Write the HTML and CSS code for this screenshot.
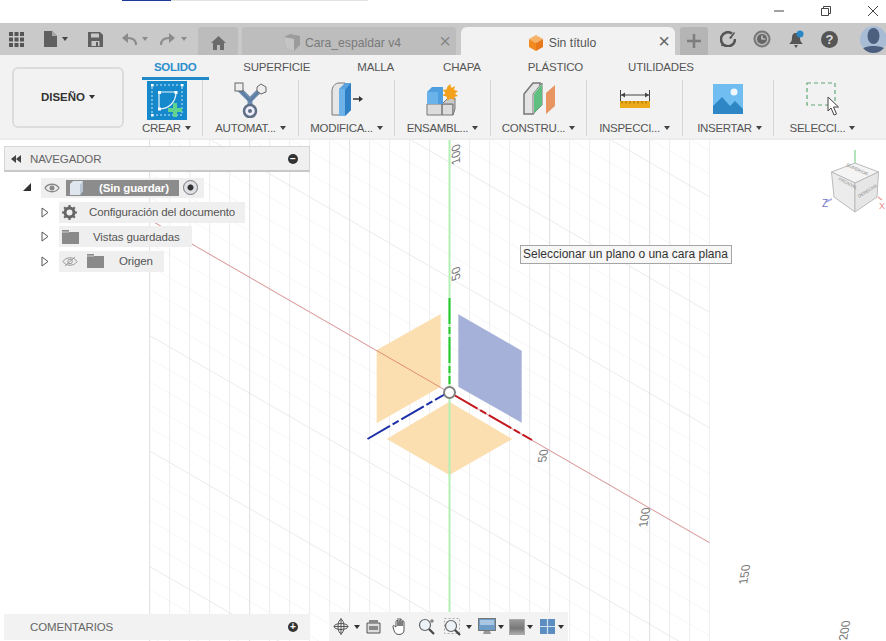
FILE: index.html
```html
<!DOCTYPE html>
<html lang="es">
<head>
<meta charset="utf-8">
<title>Sin título</title>
<link rel="stylesheet" href="styles.css">
</head>
<body>
<div class="app">
  <header class="titlebar">
    <span class="strip-blue"></span><span class="strip-gray"></span>
    <div class="winctl">
      <svg width="12" height="12" viewBox="0 0 12 12"><path d="M1 6h10" stroke="#444" fill="none"/></svg>
      <svg width="12" height="12" viewBox="0 0 12 12"><path d="M1.500 3.500h7v7h-7zM3.500 3.500v-2h7v7h-2" stroke="#444" fill="none"/></svg>
      <svg width="12" height="12" viewBox="0 0 12 12"><path d="M1 1l10 10M11 1L1 11" stroke="#444" fill="none"/></svg>
    </div>
  </header>

  <nav class="tabbar">
    <div class="qat">
      <svg class="q-grid" width="15" height="15" viewBox="0 0 15 15" fill="#555"><path d="M0 0h4v4H0zM5.500 0h4v4h-4zM11 0h4v4h-4zM0 5.500h4v4H0zM5.500 5.500h4v4h-4zM11 5.500h4v4h-4zM0 11h4v4H0zM5.500 11h4v4h-4zM11 11h4v4h-4z"/></svg>
      <svg class="q-file" width="13" height="16" viewBox="0 0 13 16" fill="#606060"><path d="M0 0h8l5 5v11H0z"/><path d="M8 0v5h5" fill="#aaa"/></svg>
      <span class="caret q-c1"></span>
      <svg class="q-save" width="15" height="15" viewBox="0 0 15 15"><path d="M0 0h12l3 3v12H0z" fill="#606060"/><path d="M3 1.500h8v4H3zM3.500 9h8v5h-8z" fill="#c8c8c8"/><path d="M8 10h2v4H8z" fill="#606060"/></svg>
      <svg class="q-undo" width="15" height="13" viewBox="0 0 15 13"><path d="M14 12c0-5-3-7-8-7H3" stroke="#8b8b8b" stroke-width="2" fill="none"/><path d="M6 0L0 5l6 5z" fill="#8b8b8b"/></svg>
      <span class="caret light q-c2"></span>
      <svg class="q-redo" width="15" height="13" viewBox="0 0 15 13"><path d="M1 12c0-5 3-7 8-7h3" stroke="#8b8b8b" stroke-width="2" fill="none"/><path d="M9 0l6 5-6 5z" fill="#8b8b8b"/></svg>
      <span class="caret light q-c3"></span>
    </div>
    <div class="tab home">
      <svg width="15" height="14" viewBox="0 0 15 14" fill="#6b6b6b"><path d="M7.500 0L15 7h-2v7H9V9H6v5H2V7H0z"/></svg>
    </div>
    <div class="tab inactive">
      <svg width="18" height="17" viewBox="0 0 18 17"><path d="M1 3l6-3 10 2v9l-6 6-8-3z" fill="#9c9c9c"/><path d="M1 3l10 2v12l-8-3z" fill="#c4c4c4"/></svg>
      <span class="tab-name">Cara_espaldar v4</span>
      <span class="tab-x">×</span>
    </div>
    <div class="tab active">
      <svg width="16" height="16" viewBox="0 0 16 16"><path d="M8 0l7 4-7 4-7-4z" fill="#f7b267"/><path d="M1 4l7 4v8l-7-4z" fill="#f28a1f"/><path d="M15 4L8 8v8l7-4z" fill="#e9781a"/></svg>
      <span class="tab-name">Sin título</span>
      <span class="tab-x">×</span>
    </div>
    <div class="tab plus">
      <svg width="14" height="14" viewBox="0 0 14 14"><path d="M7 0v14M0 7h14" stroke="#7d7d7d" stroke-width="2.500"/></svg>
    </div>
    <div class="tray">
      <svg width="16" height="16" viewBox="0 0 16 16"><path d="M12 2.500A7 7 0 1 0 15 8" stroke="#555" stroke-width="2.600" fill="none"/><path d="M9 7l5-6 1 1-4 6z" fill="#555"/><path d="M2 12l4 3H1z" fill="#555"/></svg>
      <svg width="18" height="18" viewBox="0 0 18 18"><circle cx="9" cy="9" r="8.500" fill="#777"/><circle cx="9" cy="9" r="6.500" fill="#b8b8b8"/><circle cx="9" cy="9" r="5" fill="#666"/><path d="M9 5.500V9h3.500" stroke="#ddd" stroke-width="1.200" fill="none"/></svg>
      <svg width="16" height="18" viewBox="0 0 16 18"><path d="M7 3c-3 0-4 2-4 5 0 3-1 4-3 6h14c-2-2-3-3-3-6 0-3-1-5-4-5z" fill="#555"/><path d="M5 15h4l-2 3z" fill="#555"/><circle cx="11" cy="4" r="3.500" fill="#2a86c7"/></svg>
      <span class="help">?</span>
      <svg class="avatar" width="27" height="27" viewBox="0 0 27 27"><defs><clipPath id="av"><circle cx="13.500" cy="13.500" r="13.500"/></clipPath></defs><g clip-path="url(#av)"><rect width="27" height="27" fill="#a9bcd6"/><ellipse cx="13.500" cy="10" rx="6" ry="8" fill="#4d5f7e"/><path d="M0 27c1-6 8-7 13.500-7S26 21 27 27z" fill="#4d5f7e"/></g></svg>
    </div>
  </nav>

  <section class="ribbon">
    <button class="design">DISEÑO<span class="caret dark"></span></button>
    <div class="ribbon-main">
      <div class="rtabs">
        <span class="rtab current">SOLIDO</span>
        <span class="rtab">SUPERFICIE</span>
        <span class="rtab">MALLA</span>
        <span class="rtab">CHAPA</span>
        <span class="rtab">PLÁSTICO</span>
        <span class="rtab">UTILIDADES</span>
      </div>
      <div class="tools">
        <div class="tool t-first">
          <svg width="40" height="39" viewBox="0 0 40 39"><rect width="40" height="39" fill="#1589cc"/><rect x="5" y="4" width="30" height="30" fill="none" stroke="#cfe8f6" stroke-dasharray="2 2"/><path d="M12 11h17M12 11v17M12 28c10 0 17-7 17-17" stroke="#e8f5fc" fill="none" stroke-width="1.200"/><path d="M11 10h3v3h-3zM11 26.500h3v3h-3zM27.500 10h3v3h-3zM4 3h2.500v2.500H4zM34 3h2.500v2.500H34zM4 33h2.500v2.500H4z" fill="#fff"/><path d="M26 22h4v5h5v4h-5v5h-4v-5h-5v-4h5z" fill="#5fd38d"/></svg>
          <span class="tool-label">CREAR<span class="caret"></span></span>
        </div>
        <div class="tool">
          <svg width="34" height="36" viewBox="0 0 34 36"><path d="M5 7l11 11 11-11M16 18v8" stroke="#6f8db0" stroke-width="5" fill="none"/><path d="M5 7l11 12 11-12" stroke="#5b7da3" stroke-width="2" fill="none"/><rect x="1" y="1" width="8" height="8" fill="#eee" stroke="#666"/><path d="M27 2l5 3v5l-5 2-4-3V5z" fill="#eee" stroke="#666"/><circle cx="16" cy="29" r="6" fill="#eef" stroke="#5f6f85" stroke-width="2.500"/><circle cx="16" cy="29" r="2" fill="#5f6f85"/></svg>
          <span class="tool-label">AUTOMAT...<span class="caret"></span></span>
        </div>
        <div class="tool">
          <svg width="32" height="35" viewBox="0 0 32 35"><path d="M1 33V9c0-4 3-8 7-8h6v32z" fill="#e6e6e6" stroke="#777"/><path d="M8 33V7l6-6h6v27l-6 6z" fill="#5aa3e0"/><path d="M14 8l6-7v27l-6 6z" fill="#2f7fc4"/><path d="M8 7h6v27H8z" fill="#6db2e8"/><path d="M22 17h7" stroke="#333" stroke-width="1.500"/><path d="M32 17l-4-3v6z" fill="#333"/></svg>
          <span class="tool-label">MODIFICA...<span class="caret"></span></span>
        </div>
        <div class="tool">
          <svg width="33" height="33" viewBox="0 0 33 33"><path d="M1 31V20h15v11zM16 31V20h11v11z" fill="#dcdcdc" stroke="#777"/><path d="M16 20l6-6h7v11l-2 6V20z" fill="#c9c9c9" stroke="#777"/><path d="M1 20V8l5-5h11v17z" fill="#4f9fe0"/><path d="M1 20V8h11v12z" fill="#69b3ea"/><path d="M24 0l1.500 4 3.500-2-1 4 4 1-3 2.500 3 2.500-4 1 .5 3-4-1.500-3 2-1-4-4-1 3-2.500-3-3 4-.5 1-3z" fill="#f5a11c"/></svg>
          <span class="tool-label">ENSAMBL...<span class="caret"></span></span>
        </div>
        <div class="tool">
          <svg width="32" height="33" viewBox="0 0 32 33"><path d="M1 32V12L10 1h7v22l-7 9z" fill="#e4e4e4" stroke="#777" stroke-width="1.500"/><path d="M10 32V12l9-11v22z" fill="#fff" stroke="#777"/><path d="M11 31V12l8-10v21z" fill="#5fbf80"/><path d="M23 32V11l9-8v21z" fill="#e89561"/></svg>
          <span class="tool-label">CONSTRU...<span class="caret"></span></span>
        </div>
        <div class="tool">
          <svg width="30" height="18" viewBox="0 0 30 18"><path d="M.5 0v11M29.500 0v11" stroke="#444"/><path d="M1 5h28" stroke="#444"/><path d="M1 5l4-2.500v5zM29 5l-4-2.500v5z" fill="#444"/><rect y="11" width="30" height="7" fill="#eca918"/><path d="M2 11v2.500M6 11v2.500M10 11v2.500M14 11v2.500M18 11v2.500M22 11v2.500M26 11v2.500" stroke="#9c6a00"/></svg>
          <span class="tool-label">INSPECCI...<span class="caret"></span></span>
        </div>
        <div class="tool t-insert">
          <svg width="30" height="30" viewBox="0 0 30 30"><rect width="30" height="30" fill="#6fbdf1"/><circle cx="21" cy="8" r="3.500" fill="#eef7fd"/><path d="M0 22l9-9 8 9 5-5 8 8v5H0z" fill="#2f86c4"/></svg>
          <span class="tool-label">INSERTAR<span class="caret"></span></span>
        </div>
        <div class="tool t-last">
          <svg width="36" height="34" viewBox="0 0 36 34"><rect x="2" y="1" width="28" height="22" fill="none" stroke="#5fa877" stroke-width="1.200" stroke-dasharray="4 3"/><path d="M23 15v14l3-3 3 7 2.500-1-3-7h5z" fill="#fff" stroke="#444"/></svg>
          <span class="tool-label">SELECCI...<span class="caret"></span></span>
        </div>
      </div>
    </div>
  </section>

  <main class="viewport">
    <svg class="canvas" viewBox="0 140 886 501" preserveAspectRatio="none">
      <defs>
        <pattern id="minor" width="20" height="23.094" patternUnits="userSpaceOnUse" patternTransform="translate(149 219.200) skewY(30)">
          <path d="M.5 0v23.094M0 0h20" stroke="#ededf0" fill="none"/>
        </pattern>
        <pattern id="major" width="100" height="115.470" patternUnits="userSpaceOnUse" patternTransform="translate(149 219.200) skewY(30)">
          <path d="M.5 0v115.470M0 0h100" stroke="#e2e2e6" fill="none"/>
        </pattern>
      </defs>
      <rect x="149" y="140" width="561" height="501" fill="url(#minor)"/>
      <rect x="149" y="140" width="561" height="501" fill="url(#major)"/>
      <path d="M440.700 314v72.700L376.700 423.300V350z" fill="#fbdfb0"/>
      <path d="M458.300 314.300l63.400 36.400v72L458.300 386.700z" fill="#a5b1d9"/>
      <path d="M449.300 401.700l63 37.300-63 36-62.600-36z" fill="#fbdfb0"/>
      <path d="M149 219.200L709.500 542.600" stroke="#c83c3c" stroke-opacity=".5" fill="none"/>
      <rect class="axis-y" x="448.500" y="140" width="2" height="501"/>
      <path d="M449.500 298v86" stroke="#22c92c" stroke-width="2" stroke-dasharray="26 3 7 3"/>
      <path d="M367.500 439l77-44.500" stroke="#1c2fa8" stroke-width="2" stroke-dasharray="26 3 7 3"/>
      <path d="M455 395.500l77 44.500" stroke="#c4161c" stroke-width="2" stroke-dasharray="26 3 7 3"/>
      <circle cx="449.500" cy="392.500" r="5.500" fill="#fff" stroke="#808080" stroke-width="2"/>
      <g class="grid-num">
        <text transform="translate(460 163) rotate(-90) skewX(20)">100</text>
        <text transform="translate(460 279) rotate(-90) skewX(20)">50</text>
        <text transform="translate(546 462) rotate(-80) skewX(15)">50</text>
        <text transform="translate(647 527) rotate(-80) skewX(15)">100</text>
        <text transform="translate(747 584) rotate(-80) skewX(15)">150</text>
        <text transform="translate(847 640) rotate(-80) skewX(15)">200</text>
      </g>
    </svg>

    <aside class="panel navigator">
      <div class="panel-head">
        <span class="collapse"></span><span class="panel-title">NAVEGADOR</span><span class="round-btn">−</span>
      </div>
      <ul class="tree">
        <li class="row">
          <span class="tri-open"></span>
          <div class="chip root">
            <svg width="16" height="10" viewBox="0 0 16 10"><path d="M1 5c3-5 11-5 14 0-3 5-11 5-14 0z" fill="none" stroke="#888" stroke-width="1.300"/><circle cx="8" cy="5" r="2.500" fill="#888"/></svg>
            <div class="root-name">
              <svg width="15" height="14" viewBox="0 0 15 14"><path d="M1 3l3-3h10v10l-3 4H1z" fill="#dfe6ee"/><path d="M11 4l3-4v10l-3 4z" fill="#b9c6d3"/></svg>
              <span>(Sin guardar)</span>
            </div>
            <span class="radio"></span>
          </div>
        </li>
        <li class="row">
          <svg class="tri" width="8" height="11" viewBox="0 0 8 11"><path d="M1 1l6 4.500L1 10z" fill="#fff" stroke="#555"/></svg>
          <div class="chip c-config">
            <svg width="15" height="15" viewBox="0 0 15 15"><circle cx="7.500" cy="7.500" r="4.500" fill="none" stroke="#666" stroke-width="3"/><path d="M7.500 0v15M0 7.500h15M2.200 2.200l10.600 10.600M12.800 2.200L2.200 12.800" stroke="#666" stroke-width="2.200" stroke-dasharray="2.500 10 2.500"/></svg>
            <span>Configuración del documento</span>
          </div>
        </li>
        <li class="row">
          <svg class="tri" width="8" height="11" viewBox="0 0 8 11"><path d="M1 1l6 4.500L1 10z" fill="#fff" stroke="#555"/></svg>
          <div class="chip c-views">
            <svg width="17" height="14" viewBox="0 0 17 14"><path d="M0 0h7v2h10v12H0z" fill="#8a8a8a"/><path d="M0 2h7" stroke="#d0d0d0"/></svg>
            <span>Vistas guardadas</span>
          </div>
        </li>
        <li class="row">
          <svg class="tri" width="8" height="11" viewBox="0 0 8 11"><path d="M1 1l6 4.500L1 10z" fill="#fff" stroke="#555"/></svg>
          <div class="chip c-origin">
            <svg width="16" height="11" viewBox="0 0 16 11"><path d="M1 5.500c3-5 11-5 14 0-3 5-11 5-14 0z" fill="none" stroke="#999"/><circle cx="8" cy="5.500" r="2.300" fill="none" stroke="#999"/><path d="M3 10L13 1" stroke="#999"/></svg>
            <svg width="17" height="14" viewBox="0 0 17 14"><path d="M0 0h7v2h10v12H0z" fill="#8a8a8a"/><path d="M0 2h7" stroke="#d0d0d0"/></svg>
            <span>Origen</span>
          </div>
        </li>
      </ul>
    </aside>

    <div class="tooltip">Seleccionar un plano o una cara plana</div>

    <svg class="cube" width="66" height="70" viewBox="0 0 66 70">
      <path d="M35 0v13" stroke="#9adba6" stroke-width="1.500"/>
      <path d="M12 49L6 52" stroke-width="1.500" stroke="#a9a9e0"/>
      <path d="M58 47l4 3" stroke="#eda0a0" stroke-width="1.500"/>
      <text x="2" y="57" class="cube-z">Z</text>
      <text x="59" y="59" class="cube-x">X</text>
      <path d="M35 13l23.500 9-23.500 11-23.500-11z" fill="#f4f4f4" stroke="#bbb"/>
      <path d="M11.500 22L35 33v29L14 47z" fill="#ececec" stroke="#bbb"/>
      <path d="M58.500 22L35 33v29l22-15z" fill="#e6e6e6" stroke="#bbb"/>
      <text class="cube-t" transform="translate(26 16) rotate(25)">SUPERIOR</text>
      <text class="cube-t" transform="translate(18 30) rotate(28)">FRONTAL</text>
      <text class="cube-t" transform="translate(39 48) rotate(-32)">DERECHA</text>
    </svg>

    <aside class="panel comments">
      <div class="panel-head">
        <span class="panel-title">COMENTARIOS</span><span class="round-btn">+</span>
      </div>
    </aside>

    <div class="navbar">
      <svg width="16" height="17" viewBox="0 0 16 17"><path d="M8 0v17M1 8.500h14" stroke="#555" fill="none"/><ellipse cx="8" cy="8.500" rx="7" ry="3" fill="none" stroke="#555"/><ellipse cx="8" cy="8.500" rx="3" ry="7" fill="none" stroke="#555"/></svg>
      <span class="caret dark n-c5"></span>
      <svg class="n-pan" width="15" height="14" viewBox="0 0 15 14"><path d="M1 3h13v10H1z" fill="#ddd" stroke="#555"/><path d="M3 0h9v3H3z" fill="#888"/><path d="M3 6h9v4H3z" fill="#888"/></svg>
      <svg class="n-hand" width="16" height="17" viewBox="0 0 16 17"><path d="M4 9V3.500c0-1.500 2-1.500 2 0V8-1c0-1.500 2-1.500 2 0V8 2.500c0-1.500 2-1.500 2 0V8 4c0-1.500 2-1.500 2 0v8c0 3-2 4.500-5 4.500-3 0-4-1.500-5-4L1 9c-.5-2 1.500-2 2-.5z" fill="#fff" stroke="#555"/></svg>
      <svg class="n-zoom" width="17" height="17" viewBox="0 0 17 17"><circle cx="7" cy="7" r="5.500" fill="#eef3f7" stroke="#666" stroke-width="1.200"/><path d="M11 11l5 5" stroke="#444" stroke-width="2.200"/><path d="M14 1v4M12 3h4" stroke="#666"/></svg>
      <svg class="n-win" width="18" height="18" viewBox="0 0 18 18"><rect x=".5" y=".5" width="15" height="15" fill="none" stroke="#aaa" stroke-dasharray="2 2"/><circle cx="7" cy="8" r="5.500" fill="#eef3f7" stroke="#666" stroke-width="1.200"/><path d="M11 12l5 5" stroke="#444" stroke-width="2.200"/></svg>
      <span class="caret dark n-c4"></span>
      <svg class="n-disp" width="18" height="17" viewBox="0 0 18 17"><rect x=".5" y=".5" width="17" height="12" fill="#6e9cc9" stroke="#777"/><rect x="2" y="2" width="14" height="5" fill="#a9c6e2"/><path d="M6 13h6l1 3H5z" fill="#999"/></svg>
      <span class="caret dark n-c2"></span>
      <span class="swatch"></span>
      <span class="caret dark n-c2"></span>
      <svg class="n-view" width="15" height="15" viewBox="0 0 15 15"><rect width="15" height="15" fill="#5b8dc0"/><path d="M7.500 0v15M0 7.500h15" stroke="#cfe0f0" stroke-width="1.200"/></svg>
      <span class="caret dark n-c3"></span>
    </div>
  </main>
</div>
</body>
</html>
```
FILE: styles.css
```css
* { box-sizing: border-box; }
html, body { margin: 0; padding: 0; height: 100%; overflow: hidden; }
body { font-family: "Liberation Sans", Arial, sans-serif; color: #555; background: #fff; }
ul { list-style: none; margin: 0; padding: 0; }
svg { flex: none; }

.app { width: 886px; height: 641px; display: flex; flex-direction: column; }

.caret { display: inline-block; flex: none; width: 0; height: 0; border-left: 3.500px solid transparent; border-right: 3.500px solid transparent; border-top: 4px solid #444; margin-left: 4px; vertical-align: 2px; }
.caret.dark { border-top-color: #333; }
.caret.light { border-top-color: #8b8b8b; }

/* window strip */
.titlebar { height: 23px; flex: none; display: flex; align-items: flex-start; padding-left: 122px; position: relative; }
.strip-blue { width: 49px; height: 1px; background: #1c3a9c; }
.strip-gray { width: 197px; height: 1px; background: #e2e2e2; }
.winctl { margin-left: auto; display: flex; gap: 35px; padding: 5px 7px 0 0; }

/* tab strip */
.tabbar { height: 32px; flex: none; background: #c9c9c9; display: flex; align-items: flex-end; }
.qat { width: 198px; height: 32px; padding-left: 9px; display: flex; align-items: center; flex: none; }
.q-file { margin-left: 20px; }
.q-c1 { margin-left: 5px; }
.q-save { margin-left: 20px; }
.q-undo { margin-left: 19px; }
.q-c2 { margin-left: 5px; }
.q-redo { margin-left: 12px; }
.q-c3 { margin-left: 6px; }
.tab { height: 28px; display: flex; align-items: center; justify-content: center; border-radius: 3px 3px 0 0; flex: none; padding-top: 3px; }
.home { width: 40px; background: #bcbcbc; margin-right: 4px; }
.inactive { width: 214px; background: #bdbdbd; color: #7a7a7a; margin-right: 5px; position: relative; gap: 4px; padding-right: 14px; }
.active { width: 214px; background: #f2f2f2; color: #555; margin-right: 5px; position: relative; gap: 5px; padding-right: 12px; border-radius: 6px 6px 0 0; }
.tab-name { font-size: 12.200px; }
.tab-x { position: absolute; right: 5px; top: 3px; font-size: 20px; line-height: 22px; color: #666; }
.inactive .tab-x { color: #888; }
.plus { width: 28px; background: #b5b5b5; padding-top: 0; }
.tray { height: 32px; flex: 1; display: flex; align-items: center; padding-left: 12px; }
.tray svg:nth-child(2) { margin-left: 17px; }
.tray svg:nth-child(3) { margin-left: 18px; }
.help { width: 17px; height: 17px; margin-left: 16px; border-radius: 50%; background: #555; color: #ddd; font-size: 13px; font-weight: bold; line-height: 17px; text-align: center; }
.avatar { margin-left: 22px; }

/* ribbon */
.ribbon { height: 85px; flex: none; background: #f2f2f2; display: flex; align-items: flex-start; border-bottom: 2px solid #ececec; }
.design { width: 112px; height: 61px; margin: 12px 6px 0 12px; flex: none; background: #f2f2f2; border: 2px solid #dcdcdc; border-radius: 6px; font: bold 11.500px "Liberation Sans", Arial, sans-serif; color: #333; padding: 0 0 2px; }
.ribbon-main { flex: 1; display: flex; flex-direction: column; }
.rtabs { height: 25px; padding-left: 12px; display: flex; gap: 47px; align-items: flex-start; }
.rtab { font-size: 11.500px; letter-spacing: -.2px; line-height: 24px; color: #555; }
.rtab:nth-child(4) { margin-left: 2px; }
.rtab:nth-child(6) { margin-left: -2px; }
.rtab.current { color: #2d8fce; font-weight: bold; letter-spacing: -.3px; padding: 0 13px 0 12px; margin-right: -13px; height: 25px; border-bottom: 3px solid #1f8ac7; }
.tools { display: flex; height: 58px; }
.tool { width: 96px; height: 56px; flex: none; border-right: 1px solid #d6d6d6; display: flex; flex-direction: column; align-items: center; justify-content: flex-start; position: relative; }
.t-first { width: 73px; }
.t-insert { width: 91px; }
.t-last { border-right: 0; }
.tool svg { position: absolute; }
.tool-label { position: absolute; bottom: 0; font-size: 11.500px; letter-spacing: -.3px; line-height: 15px; white-space: nowrap; color: #555; }
.t-first .tool-label { margin-left: 1px; }
.t-insert .tool-label { margin-left: 3px; }
.t-last .tool-label { margin-left: 1px; }
.tool:nth-child(1) svg { bottom: 16px; left: 17px; }
.tool:nth-child(2) svg { bottom: 18px; }
.tool:nth-child(3) svg { bottom: 19px; }
.tool:nth-child(4) svg { bottom: 19px; }
.tool:nth-child(5) svg { bottom: 21px; }
.tool:nth-child(6) svg { bottom: 28px; }
.tool:nth-child(7) svg { bottom: 22px; }
.tool:nth-child(8) svg { bottom: 20px; left: 31px; }

/* viewport */
.viewport { flex: 1; position: relative; overflow: hidden; }
.canvas { position: absolute; inset: 0; width: 886px; height: 501px; }
.grid-num { font-size: 12px; fill: #777; }
.axis-y { fill: #b4efb4; }

.panel { position: absolute; left: 4px; width: 306px; }
.navigator { top: 6px; }
.comments { top: 474px; }
.panel-head { height: 26px; background: #f0f0f0; border: 1px solid #d6d6d6; border-bottom: 2px solid #c8c8c8; display: flex; align-items: center; padding: 0 11px 0 25px; position: relative; }
.comments .panel-head { background: #f2f2f2; border-color: #f2f2f2; }
.panel-title { flex: 1; font-size: 11.500px; letter-spacing: -.15px; color: #666; }
.collapse { position: absolute; left: 6px; top: 8px; width: 10px; height: 8px; background: #444; clip-path: polygon(0 50%, 50% 0, 50% 50%, 100% 0, 100% 100%, 50% 50%, 50% 100%); }
.round-btn { width: 10px; height: 10px; border-radius: 50%; background: #333; color: #fff; font-size: 10px; font-weight: bold; line-height: 10px; text-align: center; }

.tree { padding-top: 5px; display: flex; flex-direction: column; gap: 3.500px; }
.row { display: flex; align-items: center; height: 21px; position: relative; padding-left: 37px; }
.chip { height: 21px; display: flex; align-items: center; background: #efefef; font-size: 11.500px; letter-spacing: -.13px; color: #555; white-space: nowrap; }
.tri { margin-right: 10px; }
.tri-open { position: absolute; left: 19px; top: 6px; width: 8px; height: 8px; background: #333; clip-path: polygon(100% 0, 100% 100%, 0 100%); }
.root { width: 163px; padding-left: 3px; height: 20px; }
.root-name { width: 113px; height: 16px; margin-left: 6px; background: #8c8c8c; color: #fff; font-weight: bold; font-size: 11.500px; display: flex; align-items: center; padding-left: 3px; }
.root-name span { margin-left: 15px; }
.radio { width: 15px; height: 15px; margin-left: 4px; border-radius: 50%; border: 1px solid #777; background: radial-gradient(circle, #333 2.500px, #dfe1e6 3.500px); }
.c-config { width: 186px; padding-left: 3px; gap: 12px; }
.c-views { width: 133px; padding-left: 3px; gap: 14px; }
.c-origin { width: 105px; padding-left: 3px; gap: 9px; }
.c-origin span { margin-left: 6px; }

.tooltip { position: absolute; left: 520px; top: 105px; width: 212px; height: 19px; background: #f7f7f7; border: 1px solid #a5a5a5; color: #333; font-size: 12px; line-height: 17px; padding-left: 2px; white-space: nowrap; }

.cube { position: absolute; left: 820px; top: 10px; }
.cube-t { font-size: 4.500px; fill: #888; }
.cube-z { font-size: 10px; fill: #7777cc; }
.cube-x { font-size: 9px; fill: #e58a8a; }

.navbar { position: absolute; left: 329px; top: 472px; width: 239px; height: 29px; background: #f3f3f3; display: flex; align-items: center; padding-left: 4px; }
.navbar .n-c5 { margin-left: 5px; }
.navbar .n-c4 { margin-left: 4px; }
.navbar .n-c3 { margin-left: 3px; }
.navbar .n-c2 { margin-left: 2px; }
.n-pan { margin-left: 6px; }
.n-hand { margin-left: 11px; }
.n-zoom { margin-left: 10px; }
.n-win { margin-left: 9px; }
.n-disp { margin-left: 6px; }
.n-view { margin-left: 7px; }
.swatch { flex: none; width: 16px; height: 16px; margin-left: 5px; background: linear-gradient(#999, #777 60%, #aaa); border: 1px solid #aaa; }
```
